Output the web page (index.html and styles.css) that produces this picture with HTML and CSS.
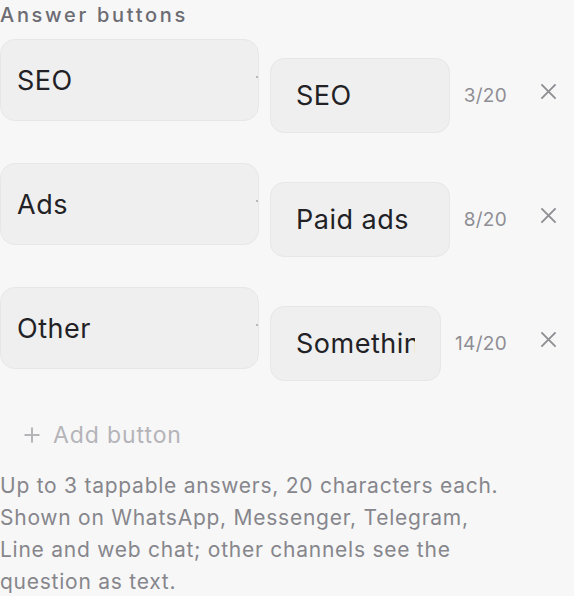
FILE: index.html
```html
<!DOCTYPE html>
<html>
<head>
<meta charset="utf-8">
<link rel="stylesheet" href="styles.css">
</head>
<body>
<section class="answers">
  <h3 class="answers-title">Answer buttons</h3>
  <div class="answer-rows">
    <div class="answer-row">
      <div class="key-field"><input class="key-input" value="SEO"></div>
      <div class="label-group">
        <input class="label-input" value="SEO">
        <span class="counter">3/20</span>
        <button class="remove" aria-label="Remove"><svg viewBox="0 0 18 18" width="18" height="18"><path d="M1.5 1.5L16.5 16.5M16.5 1.5L1.5 16.5"/></svg></button>
      </div>
    </div>
    <div class="answer-row">
      <div class="key-field"><input class="key-input" value="Ads"></div>
      <div class="label-group">
        <input class="label-input" value="Paid ads">
        <span class="counter">8/20</span>
        <button class="remove" aria-label="Remove"><svg viewBox="0 0 18 18" width="18" height="18"><path d="M1.5 1.5L16.5 16.5M16.5 1.5L1.5 16.5"/></svg></button>
      </div>
    </div>
    <div class="answer-row">
      <div class="key-field"><input class="key-input" value="Other"></div>
      <div class="label-group">
        <input class="label-input" value="Something else">
        <span class="counter">14/20</span>
        <button class="remove" aria-label="Remove"><svg viewBox="0 0 18 18" width="18" height="18"><path d="M1.5 1.5L16.5 16.5M16.5 1.5L1.5 16.5"/></svg></button>
      </div>
    </div>
  </div>
  <button class="add-button"><svg viewBox="0 0 16 16" width="16" height="16"><path d="M8 0.5V15.5M0.5 8H15.5"/></svg><span>Add button</span></button>
  <p class="help">Up to 3 tappable answers, 20 characters each.<br>Shown on WhatsApp, Messenger, Telegram,<br>Line and web chat; other channels see the<br>question as text.</p>
</section>
</body>
</html>
```

FILE: styles.css
```css
html, body {
  margin: 0;
  padding: 0;
  background: #f7f7f7;
}
body {
  font-family: Inter, "Noto Sans", sans-serif;
  overflow: hidden;
}
.answers {
  width: 574px;
  padding-top: 3px;
}
.answers-title {
  margin: 0 0 12px 0;
  font-size: 20px;
  line-height: 24px;
  font-weight: 500;
  letter-spacing: 2.7px;
  color: #6c6c73;
}
.answer-rows {
  display: flex;
  flex-direction: column;
  gap: 30px;
}
.answer-row {
  display: flex;
  align-items: flex-start;
  gap: 11px;
}
.key-field {
  position: relative;
  flex: 0 0 259px;
}
.key-field::after {
  content: "";
  position: absolute;
  right: 1px;
  top: 37px;
  width: 2px;
  height: 2px;
  background: #b9b9bd;
}
.key-input, .label-input {
  box-sizing: border-box;
  display: block;
  width: 100%;
  margin: 0;
  font-family: inherit;
  font-size: 27px;
  letter-spacing: 0.5px;
  color: #222226;
  background: #efefef;
  border: 1px solid #e7e7e7;
  outline: none;
}
.key-input {
  height: 82px;
  padding: 0 16px;
  border-radius: 15px;
}
.label-group {
  flex: 1;
  min-width: 0;
  display: flex;
  align-items: center;
  margin-top: 19px;
}
.label-input {
  flex: 1;
  min-width: 0;
  height: 75px;
  padding: 0 25px;
  border-radius: 14px;
}
.counter {
  margin-left: 14px;
  font-size: 19px;
  letter-spacing: 0.3px;
  color: #8e8e94;
  white-space: nowrap;
}
.remove {
  margin: 0 17px 8px 33px;
  padding: 0;
  width: 17px;
  height: 17px;
  border: 0;
  background: none;
  display: flex;
}
.remove svg {
  width: 17px;
  height: 17px;
  fill: none;
  stroke: #8e8e94;
  stroke-width: 2;
}
.add-button {
  display: flex;
  align-items: center;
  gap: 13px;
  margin: 39px 0 0 0;
  padding: 0 0 0 24px;
  height: 30px;
  border: 0;
  background: none;
  font-family: inherit;
  font-size: 23px;
  color: #b4b4b9;
  letter-spacing: 0.9px;
}
.add-button svg {
  fill: none;
  stroke: #b4b4b9;
  stroke-width: 2;
}
.help {
  margin: 20px 0 0 0;
  font-size: 21px;
  line-height: 32px;
  letter-spacing: 0.75px;
  color: #86868c;
  white-space: nowrap;
}
```
